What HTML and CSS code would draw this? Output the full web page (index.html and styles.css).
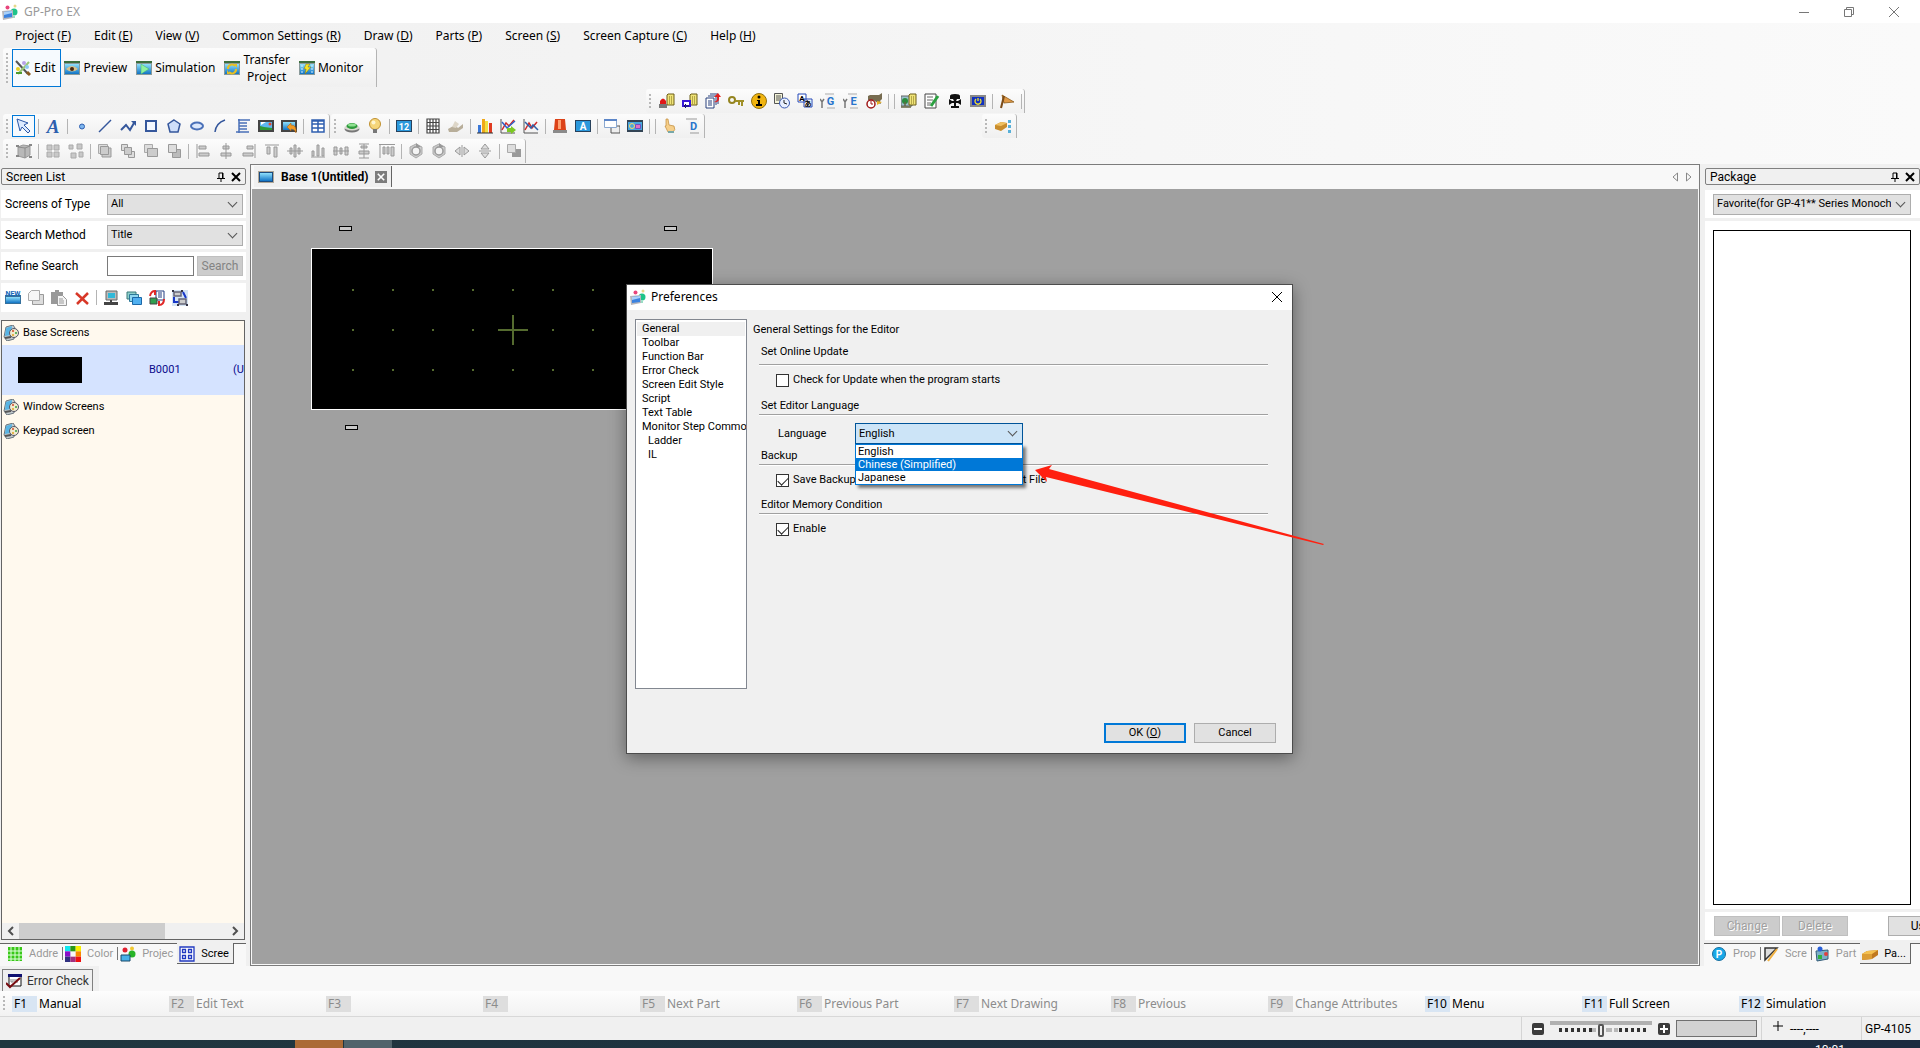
FILE: index.html
```html
<!DOCTYPE html>
<html lang="en">
<head>
    <meta charset="utf-8">
    <title>GP-Pro EX</title>
    <link rel="stylesheet" href="styles.css">
</head>
<body>
    <!-- icon sprite -->
    <svg class="sprite" aria-hidden="true">
        <defs>
            <linearGradient id="blue" x1="0" y1="0" x2="0" y2="1"><stop offset="0" stop-color="#8fe0fb"/><stop offset="1" stop-color="#1173c4"/></linearGradient>
            <symbol id="app" viewBox="0 0 16 16"><circle cx="5.500" cy="3.500" r="2" fill="#e8447c"/><circle cx="13" cy="2" r="1.500" fill="#e6d88a"/><circle cx="12" cy="8" r="3.500" fill="#1fc48a"/><path d="M5 12h8v2H5z" fill="#9adcc4"/><path d="M0 7l11-1v8l-10 2z" fill="#b6b6bc"/><path d="M2 8l8-1v6l-8 1z" fill="#3b82e0"/><path d="M2 8l8-1v2l-8 2z" fill="#a8d0fa"/></symbol>
            <symbol id="edit" viewBox="0 0 16 16"><path d="M1 1l12 13" stroke="#555" stroke-width="2"/><path d="M12 12l3 3" stroke="#8a5a20" stroke-width="3"/><path d="M14 2L3 14" stroke="#9ac878" stroke-width="2"/><circle cx="9" cy="3" r="2" fill="#b8a0e8"/><circle cx="3" cy="9" r="2" fill="#e8d020"/><circle cx="12" cy="7" r="2" fill="#8fc8f0"/><path d="M1 13h6" stroke="#4e9a30" stroke-width="2"/></symbol>
            <symbol id="frame" viewBox="0 0 16 16"><path d="M0 1h16v14H0z" fill="#8a9a9a"/><path d="M0 1h16v2H0z" fill="#3c6e3c"/><path d="M1 4h14v10H1z" fill="url(#blue)"/></symbol>
            <symbol id="preview" viewBox="0 0 16 16"><use href="#frame"/><path d="M2 9q6-6 12 0q-6 5-12 0z" fill="#d8c088"/><circle cx="8" cy="9" r="2" fill="#402818"/></symbol>
            <symbol id="simulation" viewBox="0 0 16 16"><use href="#frame"/><path d="M5 4l8 5-8 5z" fill="#8ff0a0" stroke="#3cae70" stroke-width=".5"/></symbol>
            <symbol id="transfer" viewBox="0 0 16 16"><use href="#frame"/><path d="M4 9a4 4 0 0 1 7-3M12 9a4 4 0 0 1-7 3" stroke="#e8c020" stroke-width="2" fill="none"/><path d="M10 4h3v4zM6 14H3v-4z" fill="#e8c020"/></symbol>
            <symbol id="monitor" viewBox="0 0 16 16"><use href="#frame"/><path d="M3 5v8M13 5v8" stroke="#d8f0ff" stroke-dasharray="2 1"/><path d="M7 4h4L9 7h3l-6 7 1-5H5z" fill="#f4e428" stroke="#806c10" stroke-width=".5"/></symbol>
            <symbol id="select" viewBox="0 0 16 16"><path d="M1 1l11 4-4 2 6 6-2 2-6-6-2 4z" fill="#dceaff" stroke="#2b57a8"/></symbol>
            <symbol id="text" viewBox="0 0 16 16"><text x="8" y="15" class="glyph-serif" font-size="19" text-anchor="middle" fill="#2d5fae">A</text></symbol>
            <symbol id="dot" viewBox="0 0 16 16"><circle cx="8" cy="8.500" r="2.500" fill="#7eb6ee" stroke="#2f5fb0"/></symbol>
            <symbol id="line" viewBox="0 0 16 16"><path d="M2 14L14 2" stroke="#35579c" stroke-width="1.500"/></symbol>
            <symbol id="polyline" viewBox="0 0 16 16"><path d="M1 12l5-5 4 5 4-7" stroke="#35579c" stroke-width="2" fill="none"/><path d="M11 3h5v5z" fill="#35579c"/></symbol>
            <symbol id="rect" viewBox="0 0 16 16"><path d="M3 3h10v10H3z" fill="#f4f8ff" stroke="#35579c" stroke-width="2"/></symbol>
            <symbol id="polygon" viewBox="0 0 16 16"><path d="M8 2l6 4-2 8H4L2 6z" fill="#cfdffa" stroke="#35579c" stroke-width="1.500"/></symbol>
            <symbol id="ellipse" viewBox="0 0 16 16"><ellipse cx="8" cy="8" rx="6" ry="3.500" fill="#dce8fc" stroke="#4a70b8" stroke-width="2"/></symbol>
            <symbol id="arc" viewBox="0 0 16 16"><path d="M3 14q1-9 10-12" stroke="#35579c" stroke-width="1.500" fill="none"/></symbol>
            <symbol id="scale" viewBox="0 0 16 16"><path d="M4 1v14M3 2h12M4 5h8M4 8h8M4 11h8M1 14h13" stroke="#4a70b8" stroke-width="1.500"/></symbol>
            <symbol id="picture" viewBox="0 0 16 16"><path d="M0 2h16v12H0z" fill="#444"/><path d="M2 4h12v8H2z" fill="#5db8f0"/><path d="M2 12V8l4 1 8 1v2z" fill="#2e9a38"/><path d="M3 4h5l-5 3z" fill="#fff"/><circle cx="12" cy="6" r="1.500" fill="#e84830"/></symbol>
            <symbol id="image-out" viewBox="0 0 16 16"><path d="M0 2h16v12H0z" fill="#444"/><path d="M2 4h12v8H2z" fill="url(#blue)"/><path d="M6 9l4-4v2q6 0 5 8-1-4-5-4v2z" fill="#f29a22" stroke="#a86010" stroke-width=".5"/></symbol>
            <symbol id="table" viewBox="0 0 16 16"><path d="M2 2h12v12H2zM2 6h12M2 10h12M8 2v12M2 3h12" fill="#fff" stroke="#2f5fb0" stroke-width="1.500"/></symbol>
            <symbol id="switch" viewBox="0 0 16 16"><ellipse cx="8" cy="11" rx="7.500" ry="3.500" fill="#777"/><ellipse cx="8" cy="9.500" rx="7.500" ry="3" fill="#d8d8d0"/><ellipse cx="8" cy="8" rx="5.500" ry="3" fill="#2d9a3a"/><ellipse cx="8" cy="7" rx="4" ry="1.500" fill="#8fe090"/></symbol>
            <symbol id="lamp" viewBox="0 0 16 16"><circle cx="8" cy="6" r="5.500" fill="#f6d67a" stroke="#c09030"/><circle cx="6.500" cy="4.500" r="2" fill="#fff6d0"/><path d="M6 11h4v4H6z" fill="#777"/></symbol>
            <symbol id="display12" viewBox="0 0 16 16"><path d="M0 2h16v12H0z" fill="#27415c"/><path d="M1 3h14v10H1z" fill="#2b98dc"/><text x="8" y="11.500" font-size="9" font-weight="700" text-anchor="middle" fill="#fff">12</text></symbol>
            <symbol id="keypad" viewBox="0 0 16 16"><path d="M2 1h12v14H2zM5 1v14M8 1v14M11 1v14M2 4.500h12M2 8h12M2 11.500h12" fill="#fff" stroke="#444" stroke-width="1.200"/></symbol>
            <symbol id="drive" viewBox="0 0 16 16"><path d="M0 11l7-4 3 3 5-4v4l-6 4H1z" fill="#b8ae9a"/><path d="M7 3l4 3-3 4-4-1z" fill="#ddd6c8"/></symbol>
            <symbol id="bars" viewBox="0 0 16 16"><path d="M1 7h3v8H1z" fill="#3a78d8"/><path d="M5 1h3v14H5z" fill="#f0a818"/><path d="M8 3h3v12H8z" fill="#f0e040"/><path d="M12 5h3v10h-3z" fill="#e03a20"/><path d="M0 15h16" stroke="#333"/></symbol>
            <symbol id="trend-run" viewBox="0 0 16 16"><path d="M1 1v14h14" stroke="#555" fill="none"/><path d="M2 12l4-7 3 3 5-6" stroke="#d02828" stroke-width="1.500" fill="none"/><path d="M2 4l5 6 8-7" stroke="#3060c8" stroke-width="1.500" fill="none"/><path d="M7 10h4V8l5 4-5 4v-2H7z" fill="#7cc822"/></symbol>
            <symbol id="trend" viewBox="0 0 16 16"><path d="M1 1v14h14" stroke="#555" fill="none"/><path d="M2 12l4-7 3 5 5-6" stroke="#d02828" stroke-width="1.500" fill="none"/><path d="M2 4l6 6 2-3 5 5" stroke="#3060a8" stroke-width="1.500" fill="none"/></symbol>
            <symbol id="alarm" viewBox="0 0 16 16"><path d="M3 1h10l1 11H2z" fill="#dc4218"/><path d="M6 2h3v9H6z" fill="#ffa070"/><path d="M1 12h14v3H1z" fill="#8a8a8a"/></symbol>
            <symbol id="message" viewBox="0 0 16 16"><path d="M0 2h16v12H0z" fill="#27415c"/><path d="M1 3h14v10H1z" fill="#2b98dc"/><text x="8" y="11.500" font-size="10" font-weight="700" text-anchor="middle" fill="#fff">A</text></symbol>
            <symbol id="windows" viewBox="0 0 16 16"><path d="M7 8h9v7H7z" fill="#eee" stroke="#555"/><path d="M.5 1.500h12v8H.5z" fill="#fff" stroke="#8aa8d0"/><path d="M0 1h13v2H0z" fill="#5c86c8"/></symbol>
            <symbol id="movie" viewBox="0 0 16 16"><path d="M0 2h16v12H0z" fill="#345"/><path d="M1 4h14v8H1z" fill="#48a8e0"/><circle cx="5" cy="8" r="2.500" fill="none" stroke="#ffd860"/><path d="M8.500 6.500h5v4h-5z" fill="#e070c8" stroke="#7050c0"/></symbol>
            <symbol id="hand" viewBox="0 0 16 16"><path d="M4 1h2l1 6 5 1q2 4-1 6H6L3 8h1z" fill="#f6cf8a" stroke="#c08a38" stroke-width=".7"/><path d="M6 13h6v2H6z" fill="#78a8a8"/></symbol>
            <symbol id="script-d" viewBox="0 0 16 16"><path d="M2 2h12l-1 12H5L4 4z" fill="#f4f4f4"/><path d="M1 1h11M5 15h9" stroke="#999"/><text x="8.500" y="12" font-size="11" font-weight="700" text-anchor="middle" fill="#2874cc">D</text></symbol>
            <symbol id="script-g" viewBox="0 0 16 16"><path d="M6 2h9v12H6z" fill="#f4f4f4"/><path d="M5 1h9M7 15h8" stroke="#aaa"/><path d="M2 8v7M0 6l2 3 2-3" stroke="#777" stroke-width="1.500" fill="none"/><text x="10.500" y="12" font-size="11" font-weight="700" text-anchor="middle" fill="#2874cc">G</text></symbol>
            <symbol id="script-e" viewBox="0 0 16 16"><path d="M6 2h9v12H6z" fill="#f4f4f4"/><path d="M5 1h9M7 15h8" stroke="#aaa"/><path d="M2 8v7M0 6l2 3 2-3" stroke="#777" stroke-width="1.500" fill="none"/><text x="10.500" y="12" font-size="11" font-weight="700" text-anchor="middle" fill="#2874cc">E</text></symbol>
            <symbol id="page" viewBox="0 0 16 16"><path d="M9 1h6v11H8V2z" fill="#f0e478" stroke="#6c5f18"/><path d="M10 4h4M10 6h4M10 8h4M10 10h4" stroke="#7c6c18" stroke-dasharray="1 1"/></symbol>
            <symbol id="g-alarm" viewBox="0 0 16 16"><use href="#page"/><path d="M1 11V8q3-5 6 0v3z" fill="#e01818"/><path d="M0 11h8v4H0z" fill="#777"/></symbol>
            <symbol id="g-sample" viewBox="0 0 16 16"><use href="#page"/><path d="M1 8h7v5H1z" fill="#fff" stroke="#3818d8" stroke-width="2"/><path d="M2 13h5M4 11l-2 2 2 2" stroke="#101060" fill="none"/></symbol>
            <symbol id="g-recipe" viewBox="0 0 16 16"><path d="M1 5h8v10H1zM3 3h8v9M5 1h8v10" fill="#fff" stroke="#28407c"/><path d="M3 8h4M3 10h4M3 12h4" stroke="#28407c"/><path d="M9 9q4-1 3-5H9l4-4 3 4h-2q1 6-5 5z" fill="#e02020"/></symbol>
            <symbol id="key" viewBox="0 0 16 16"><circle cx="4" cy="7" r="3" fill="none" stroke="#948420" stroke-width="2"/><path d="M7 8h9M11 8v4M14 8v5" stroke="#a09028" stroke-width="2"/></symbol>
            <symbol id="info" viewBox="0 0 16 16"><circle cx="8" cy="8" r="7.500" fill="#f0b410" stroke="#907010"/><circle cx="8" cy="4" r="1.500"/><path d="M6 7h3v4h2v2H5v-2h2V8H6z"/></symbol>
            <symbol id="schedule" viewBox="0 0 16 16"><path d="M.5.5h8v10h-8z" fill="#f4f4d8" stroke="#555"/><path d="M2 3h5M2 5h5M2 7h5" stroke="#555"/><circle cx="10.500" cy="10" r="5" fill="#e8f0ff" stroke="#3858b0"/><path d="M10 7v3l3 1" stroke="#222" fill="none"/></symbol>
            <symbol id="lang" viewBox="0 0 16 16"><path d="M1 1h8v8H1zM7 6h8v8H7z" fill="#fff" stroke="#2448b8"/><text x="5" y="8" font-size="8" font-weight="700" text-anchor="middle">A</text><text x="11" y="13" font-size="7" font-weight="700" text-anchor="middle">あ</text></symbol>
            <symbol id="timer" viewBox="0 0 16 16"><path d="M4 2h9l3-2v6l-2 2 1 3-3-1-5-3H2V3z" fill="#776c50"/><path d="M11 8l5 1-5 3z" fill="#e8b020"/><circle cx="5" cy="11" r="4" fill="#fff" stroke="#a01818" stroke-width="1.500"/><path d="M5 8v3h2" stroke="#a01818" fill="none"/></symbol>
            <symbol id="tree-page" viewBox="0 0 16 16"><path d="M0 3h11v10H0z" fill="#9ac0cc" stroke="#666"/><circle cx="4" cy="8" r="3" fill="#2a8c3c"/><path d="M4 9v4M0 14h10" stroke="#664" stroke-width="1.500"/><use href="#page"/></symbol>
            <symbol id="note" viewBox="0 0 16 16"><path d="M1 1h11v14H1z" fill="#fff" stroke="#444"/><path d="M3 4h6M3 7h6M3 10h4M3 12h3" stroke="#666"/><path d="M14 3L7 13" stroke="#2ba040" stroke-width="3"/></symbol>
            <symbol id="valve" viewBox="0 0 16 16"><path d="M3 3q0-2 5-2t5 2v3h-3l-1 2h2l3-2v6l-3-2H9v3h3v2H4v-2h3v-3H5l-3 2V6l3 2h2L6 6H3z" fill="#111"/></symbol>
            <symbol id="power" viewBox="0 0 16 16"><path d="M0 2h16v12H0z" fill="#888"/><path d="M2 4h12v8H2z" fill="#1030c0"/><path d="M6 6a3 3 0 1 0 4 0M8 5v3" stroke="#f4e428" stroke-width="1.300" fill="none"/></symbol>
            <symbol id="flag" viewBox="0 0 16 16"><path d="M3 2l12 7-10 1z" fill="#e09a48" stroke="#8c5a18" stroke-width=".8"/><path d="M5 3L2 15" stroke="#7c4c18" stroke-width="2"/></symbol>
            <symbol id="box-tree" viewBox="0 0 16 16"><path d="M0 7l6-3 6 1v4l-6 4-6-2z" fill="#c88c2c"/><path d="M0 7l6 1 6-3-6-1z" fill="#f0c060"/><path d="M13 2h3v3h-3zM13 7h3v3h-3zM13 12h3v3h-3z" fill="#58b0d8"/></symbol>
            <symbol id="d-group" viewBox="0 0 16 16"><path d="M2 4l5-2 7 1v9l-5 3-7-2z" fill="#b8b8b8" stroke="#999"/><path d="M2 4l7 1 5-2M9 5v10" stroke="#8c8c8c" fill="none"/><path d="M0 3h3M0 13h3M13 2h3M13 14h3" stroke="#888" stroke-width="2"/></symbol>
            <symbol id="d-tile" viewBox="0 0 16 16"><path d="M2 2h5v5H2zM9 2h5v5H9zM2 9h5v5H2zM9 9h5v5H9z" fill="#c8c8c8" stroke="#aaa"/></symbol>
            <symbol id="d-ungroup" viewBox="0 0 16 16"><path d="M1 2h4v4H1zM9 1h5v5H9zM3 10h5v5H3zM11 9h4v5h-4z" fill="#c8c8c8" stroke="#aaa"/></symbol>
            <symbol id="d-front" viewBox="0 0 16 16"><path d="M5 5h9v9H5z" fill="#ccc" stroke="#999"/><path d="M1.500 1.500h9v9h-9z" fill="#ddd" stroke="#aaa"/><path d="M3.500 3.500h8v8h-8z" fill="#ccc" stroke="#999"/></symbol>
            <symbol id="d-forward" viewBox="0 0 16 16"><path d="M1.500 1.500h6v6h-6zM8.500 8.500h6v6h-6z" fill="#ddd" stroke="#999"/><path d="M4.500 4.500h7v7h-7z" fill="#ccc" stroke="#999"/></symbol>
            <symbol id="d-back" viewBox="0 0 16 16"><path d="M1.500 1.500h8v8h-8z" fill="#ddd" stroke="#aaa"/><path d="M4.500 5.500h10v8h-10z" fill="#ccc" stroke="#999"/></symbol>
            <symbol id="d-last" viewBox="0 0 16 16"><path d="M6.500 6.500h8v8h-8z" fill="#bbb" stroke="#999"/><path d="M2.500 1.500h8v8h-8z" fill="#ddd" stroke="#999"/></symbol>
            <symbol id="d-left" viewBox="0 0 16 16"><path d="M2 1v14M4 3h7v3H4zM4 10h10v3H4z" fill="#ccc" stroke="#999"/></symbol>
            <symbol id="d-center" viewBox="0 0 16 16"><path d="M8 0v16M5 3h6v3H5zM3 10h10v3H3z" fill="#ccc" stroke="#999"/></symbol>
            <symbol id="d-right" viewBox="0 0 16 16"><path d="M14 1v14M6 3h6v3H6zM2 10h10v3H2z" fill="#ccc" stroke="#999"/></symbol>
            <symbol id="d-top" viewBox="0 0 16 16"><path d="M1 2h14M3 4h3v7H3zM10 4h3v10h-3z" fill="#ccc" stroke="#999"/></symbol>
            <symbol id="d-middle" viewBox="0 0 16 16"><path d="M0 8h16M3 5h2v6H3zM7 2h2v12H7zM11 5h2v6h-2z" fill="#ccc" stroke="#999"/></symbol>
            <symbol id="d-bottom" viewBox="0 0 16 16"><path d="M1 14h14M2 8h2v5H2zM7 2h2v11H7zM12 5h2v8h-2z" fill="#ccc" stroke="#999"/></symbol>
            <symbol id="d-hspace" viewBox="0 0 16 16"><path d="M0 8h16M1 4h3v8H1zM12 4h3v8h-3zM7 5h2v6H7z" fill="#ccc" stroke="#999"/></symbol>
            <symbol id="d-vspace" viewBox="0 0 16 16"><path d="M3 1h10M8 1v14M3 15h10M5 3h6v2H5zM3 8h10v3H3z" fill="#ccc" stroke="#999"/></symbol>
            <symbol id="d-equal" viewBox="0 0 16 16"><path d="M0 1.500h16M1 1v14M4 4h2v7H4zM8 4h2v7H8zM12 4h3v9h-3z" fill="#ccc" stroke="#999"/></symbol>
            <symbol id="d-rotate" viewBox="0 0 16 16"><path d="M8 1l6 3v7l-6 4-6-4V4z" fill="#ccc" stroke="#aaa"/><circle cx="8" cy="8" r="4" fill="#f4f4f4" stroke="#999" stroke-width="1.500"/><path d="M8 0l5 4H8z" fill="#999"/></symbol>
            <symbol id="d-fliph" viewBox="0 0 16 16"><path d="M1 8l5-4v8zM15 8l-5-4v8zM8 2v12" fill="#ddd" stroke="#999"/></symbol>
            <symbol id="d-flipv" viewBox="0 0 16 16"><path d="M8 1l4 5H4zM8 15l4-5H4zM2 8h12" fill="#ddd" stroke="#999"/></symbol>
            <symbol id="d-merge" viewBox="0 0 16 16"><path d="M6 6h9v8H6z" fill="#999"/><path d="M1.500 1.500h8v8h-8z" fill="#ddd" stroke="#aaa"/></symbol>
            <symbol id="new" viewBox="0 0 16 16"><path d="M0 5h16v9H0z" fill="#35709c"/><path d="M1 7h14v6H1z" fill="url(#blue)"/><text x="8" y="5.500" font-size="7" font-weight="700" text-anchor="middle" fill="#1668b8">NEW</text></symbol>
            <symbol id="copy" viewBox="0 0 16 16"><path d="M4.500 4.500h11v10h-11z" fill="#ddd" stroke="#999"/><path d="M.5 3.500l3-3h8v10H.5z" fill="#f6f6f6" stroke="#aaa"/></symbol>
            <symbol id="paste" viewBox="0 0 16 16"><path d="M0 2h4V0h4v2h4v12H0z" fill="#999"/><path d="M6.500 5.500h5l4 4v6h-9z" fill="#f4f4f4" stroke="#999"/><path d="M8 9h4M8 11h5M8 13h5" stroke="#999"/></symbol>
            <symbol id="delete" viewBox="0 0 16 16"><path d="M2 3l12 11M14 3L3 14" stroke="#d83828" stroke-width="2.500"/></symbol>
            <symbol id="pc" viewBox="0 0 16 16"><path d="M3 1h11v9H3z" fill="#bbb" stroke="#666"/><path d="M5 3h7v5H5z" fill="#30b8d8"/><path d="M1 12h6v3H1zM9 12h6v3H9zM7 10h2v5H7z" fill="#444"/></symbol>
            <symbol id="layers" viewBox="0 0 16 16"><path d="M1 2h9v7H1z" fill="#8fd0cc" stroke="#387878"/><path d="M3.500 4.500h9v7h-9z" fill="#8fd8f0" stroke="#2c7898"/><path d="M6.500 7.500h9v7h-9z" fill="#50b0f0" stroke="#1c68a8"/></symbol>
            <symbol id="convert" viewBox="0 0 16 16"><path d="M7 1h8v9H7z" fill="#fff" stroke="#223c80"/><path d="M9 3h4M9 5h4M9 7h4" stroke="#223c80"/><path d="M1 8h7v6H1z" fill="#30a050" stroke="#444"/><path d="M1 6q1-5 5-5v4M15 9q0 6-5 6v-4" stroke="#e02828" stroke-width="2" fill="none"/></symbol>
            <symbol id="link" viewBox="0 0 16 16"><path d="M0 0h16v16H0z" fill="#d4e4f4"/><path d="M2 7v5h5M11 2l3 6" stroke="#1838c8" stroke-width="2" fill="none"/><path d="M2 2h7v4H2zM7 9h7v5H7z" fill="#ccc" stroke="#667" stroke-width="1.500"/><path d="M0 0h2v2H0zM9 0h2v2H9zM5 14h2v2H5zM14 14h2v2h-2z" fill="#334"/></symbol>
            <symbol id="cat" viewBox="0 0 16 16"><path d="M3 2l7-2 2 3-1 11-7 2-3-4z" fill="#c4ccd0" stroke="#68747c"/><path d="M3 3l6-2-1 9-6 1z" fill="#58b4e4"/><circle cx="11" cy="8" r="4.500" fill="#f0ead0" stroke="#556"/><circle cx="10" cy="6" r="1" fill="#d04828"/><circle cx="13" cy="8" r="1" fill="#38a040"/><circle cx="10" cy="10" r="1" fill="#e0a020"/><path d="M2 13l6-1" stroke="#555" stroke-width="2"/></symbol>
            <symbol id="base" viewBox="0 0 16 12"><path d="M0 0h16v12H0z" fill="#b0a898"/><path d="M1 1h14v10H1z" fill="#1c4c80"/><path d="M2 2h12v8H2z" fill="url(#blue)"/></symbol>
            <symbol id="pin" viewBox="0 0 10 10"><path d="M3 1h4v5M3 1v5M1 6.500h8M5 7v3M6.500 1v5" stroke="#000" fill="none"/></symbol>
            <symbol id="close" viewBox="0 0 10 10"><path d="M1 1l8 8M9 1L1 9" stroke="currentColor" stroke-width="2"/></symbol>
            <symbol id="t-grid" viewBox="0 0 16 16"><path d="M1 1h14v14H1z" fill="#38c818"/><path d="M0 5h16M0 9h16M0 13h16M4 0v16M8 0v16M12 0v16" stroke="#e4ffe0"/></symbol>
            <symbol id="t-color" viewBox="0 0 15 15"><path d="M0 0h5v5H0z" fill="#10e8f0"/><path d="M5 0h5v5H5z" fill="#289818"/><path d="M10 0h5v5h-5z" fill="#f8f000"/><path d="M0 5h5v5H0z" fill="#8810c8"/><path d="M10 5h5v5h-5z" fill="#f88800"/><path d="M0 10h5v5H0z" fill="#303080"/><path d="M5 10h5v5H5z" fill="#a03080"/><path d="M10 10h5v5h-5z" fill="#f01010"/></symbol>
            <symbol id="t-project" viewBox="0 0 16 16"><circle cx="5" cy="4" r="2.500" fill="#e02030"/><circle cx="12" cy="2.500" r="2" fill="#f0c830"/><circle cx="12" cy="8" r="3.500" fill="#28b428"/><path d="M1 9h9v6H1z" fill="#48b0e8" stroke="#184868"/></symbol>
            <symbol id="t-screen" viewBox="0 0 16 16"><path d="M1 1h14v14H1zM3.500 3.500h3v3h-3zM9.500 3.500h3v3h-3zM3.500 9.500h3v3h-3zM9.500 9.500h3v3h-3z" fill="#fff" stroke="#2038c0" stroke-width="1.300"/></symbol>
            <symbol id="t-prop" viewBox="0 0 16 16"><circle cx="8" cy="8" r="6.500" fill="#18a8e8" stroke="#1870a0"/><text x="8" y="11.500" font-size="10" font-weight="700" text-anchor="middle" fill="#fff">P</text></symbol>
            <symbol id="t-draw" viewBox="0 0 16 16"><path d="M2 2h12L2 14z" fill="#ddd" stroke="#333" stroke-width="1.500"/><path d="M14 3L5 15" stroke="#f0b040" stroke-width="2"/></symbol>
            <symbol id="t-part" viewBox="0 0 16 16"><path d="M2 5l12-1v9l-11 2z" fill="#7cb0c8" stroke="#345c78"/><circle cx="6" cy="3" r="2.500" fill="#2860d8"/><circle cx="12" cy="8" r="2" fill="#e04040"/><path d="M4 9h4v4H4z" fill="#30b040"/></symbol>
            <symbol id="t-pack" viewBox="0 0 16 16"><path d="M0 8l5-3 11-1v5l-6 4-10 1z" fill="#c07820"/><path d="M0 8l5-3 11-1-6 4z" fill="#f4c050"/><path d="M0 8h10v5l-10 1z" fill="#dc9c34"/></symbol>
            <symbol id="t-error" viewBox="0 0 16 14"><path d="M3 1h12v11H3z" fill="#fff" stroke="#111"/><path d="M2 0h14v3H2z" fill="#101070"/><path d="M5 5v3h2V5M9 5v3M11 5v4" stroke="#888" fill="none"/><path d="M0 9l4 4 10-9" stroke="#780c10" stroke-width="2" fill="none"/></symbol>
        </defs>
    </svg>

    <div class="app">
        <header class="titlebar">
            <svg class="icon"><use href="#app"/></svg>
            <h1 class="app-name">GP-Pro EX</h1>
            <div class="window-buttons">
                <button aria-label="Minimize"><svg viewBox="0 0 12 12"><path d="M1 6.500h10"/></svg></button>
                <button aria-label="Restore"><svg viewBox="0 0 12 12"><path d="M1.500 3.500h7v7h-7zM3.500 3V1.500h7v7H9"/></svg></button>
                <button aria-label="Close"><svg viewBox="0 0 12 12"><path d="M1 1l10 10M11 1L1 11"/></svg></button>
            </div>
        </header>

        <nav class="menu">
            <button>Project (<u>F</u>)</button>
            <button>Edit (<u>E</u>)</button>
            <button>View (<u>V</u>)</button>
            <button>Common Settings (<u>R</u>)</button>
            <button>Draw (<u>D</u>)</button>
            <button>Parts (<u>P</u>)</button>
            <button>Screen (<u>S</u>)</button>
            <button>Screen Capture (<u>C</u>)</button>
            <button>Help (<u>H</u>)</button>
        </nav>

        <div class="toolbars">
            <div class="toolbar modes">
                <span class="grip"></span>
                <button class="mode active"><svg class="icon"><use href="#edit"/></svg>Edit</button>
                <button class="mode"><svg class="icon"><use href="#preview"/></svg>Preview</button>
                <button class="mode"><svg class="icon"><use href="#simulation"/></svg>Simulation</button>
                <button class="mode"><svg class="icon"><use href="#transfer"/></svg>Transfer<br>Project</button>
                <button class="mode"><svg class="icon"><use href="#monitor"/></svg>Monitor</button>
            </div>

            <div class="toolbar-row common">
                <div class="toolbar">
                    <span class="grip"></span>
                    <button class="tool" aria-label="Alarm"><svg><use href="#g-alarm"/></svg></button>
                    <button class="tool" aria-label="Sampling"><svg><use href="#g-sample"/></svg></button>
                    <button class="tool" aria-label="Recipe"><svg><use href="#g-recipe"/></svg></button>
                    <button class="tool" aria-label="Security"><svg><use href="#key"/></svg></button>
                    <button class="tool" aria-label="Interlock"><svg><use href="#info"/></svg></button>
                    <button class="tool" aria-label="Time Schedule"><svg><use href="#schedule"/></svg></button>
                    <button class="tool" aria-label="Text Table"><svg><use href="#lang"/></svg></button>
                    <button class="tool" aria-label="Global D-Script"><svg><use href="#script-g"/></svg></button>
                    <button class="tool" aria-label="Extended Script"><svg><use href="#script-e"/></svg></button>
                    <button class="tool" aria-label="Trigger Action"><svg><use href="#timer"/></svg></button>
                    <span class="sep"></span><span class="sep"></span>
                    <button class="tool" aria-label="Image Registration"><svg><use href="#tree-page"/></svg></button>
                    <button class="tool" aria-label="Text Registration"><svg><use href="#note"/></svg></button>
                    <button class="tool" aria-label="Mark"><svg><use href="#valve"/></svg></button>
                    <button class="tool" aria-label="Startup Screen"><svg><use href="#power"/></svg></button>
                    <span class="sep"></span>
                    <button class="tool" aria-label="Flag"><svg><use href="#flag"/></svg></button>
                    <span class="sep"></span>
                </div>
            </div>

            <div class="toolbar-row">
                <div class="toolbar">
                    <span class="grip"></span>
                    <button class="tool active" aria-label="Select"><svg><use href="#select"/></svg></button>
                    <span class="sep"></span>
                    <button class="tool" aria-label="Text"><svg><use href="#text"/></svg></button>
                    <span class="sep"></span>
                    <button class="tool" aria-label="Dot"><svg><use href="#dot"/></svg></button>
                    <button class="tool" aria-label="Line"><svg><use href="#line"/></svg></button>
                    <button class="tool" aria-label="Polyline"><svg><use href="#polyline"/></svg></button>
                    <button class="tool" aria-label="Rectangle"><svg><use href="#rect"/></svg></button>
                    <button class="tool" aria-label="Polygon"><svg><use href="#polygon"/></svg></button>
                    <button class="tool" aria-label="Ellipse"><svg><use href="#ellipse"/></svg></button>
                    <button class="tool" aria-label="Arc"><svg><use href="#arc"/></svg></button>
                    <button class="tool" aria-label="Scale"><svg><use href="#scale"/></svg></button>
                    <button class="tool" aria-label="Image"><svg><use href="#picture"/></svg></button>
                    <button class="tool" aria-label="Call Screen"><svg><use href="#image-out"/></svg></button>
                    <span class="sep"></span>
                    <button class="tool" aria-label="Table"><svg><use href="#table"/></svg></button>
                </div>
                <div class="toolbar">
                    <span class="grip"></span>
                    <button class="tool" aria-label="Switch"><svg><use href="#switch"/></svg></button>
                    <button class="tool" aria-label="Lamp"><svg><use href="#lamp"/></svg></button>
                    <span class="sep"></span>
                    <button class="tool" aria-label="Data Display"><svg><use href="#display12"/></svg></button>
                    <span class="sep"></span>
                    <button class="tool" aria-label="Keypad"><svg><use href="#keypad"/></svg></button>
                    <button class="tool" aria-label="Data Transfer"><svg><use href="#drive"/></svg></button>
                    <span class="sep"></span>
                    <button class="tool" aria-label="Graph"><svg><use href="#bars"/></svg></button>
                    <button class="tool" aria-label="Historical Trend"><svg><use href="#trend-run"/></svg></button>
                    <button class="tool" aria-label="Trend Graph"><svg><use href="#trend"/></svg></button>
                    <span class="sep"></span>
                    <button class="tool" aria-label="Alarm Parts"><svg><use href="#alarm"/></svg></button>
                    <button class="tool" aria-label="Message Display"><svg><use href="#message"/></svg></button>
                    <span class="sep"></span>
                    <button class="tool" aria-label="Window"><svg><use href="#windows"/></svg></button>
                    <button class="tool" aria-label="Movie"><svg><use href="#movie"/></svg></button>
                    <span class="sep"></span><span class="sep"></span>
                    <button class="tool" aria-label="Trigger"><svg><use href="#hand"/></svg></button>
                    <button class="tool" aria-label="D-Script"><svg><use href="#script-d"/></svg></button>
                </div>
                <div class="toolbar package-bar">
                    <span class="grip"></span>
                    <button class="tool" aria-label="Package"><svg><use href="#box-tree"/></svg></button>
                </div>
            </div>

            <div class="toolbar-row">
                <div class="toolbar">
                    <span class="grip"></span>
                    <button class="tool" aria-label="Group" disabled><svg><use href="#d-group"/></svg></button>
                    <span class="sep"></span>
                    <button class="tool" aria-label="Tile" disabled><svg><use href="#d-tile"/></svg></button>
                    <button class="tool" aria-label="Ungroup" disabled><svg><use href="#d-ungroup"/></svg></button>
                    <span class="sep"></span>
                    <button class="tool" aria-label="Bring to Front" disabled><svg><use href="#d-front"/></svg></button>
                    <button class="tool" aria-label="Bring Forward" disabled><svg><use href="#d-forward"/></svg></button>
                    <button class="tool" aria-label="Send Backward" disabled><svg><use href="#d-back"/></svg></button>
                    <button class="tool" aria-label="Send to Back" disabled><svg><use href="#d-last"/></svg></button>
                    <span class="sep"></span>
                    <button class="tool" aria-label="Align Left" disabled><svg><use href="#d-left"/></svg></button>
                    <button class="tool" aria-label="Align Center" disabled><svg><use href="#d-center"/></svg></button>
                    <button class="tool" aria-label="Align Right" disabled><svg><use href="#d-right"/></svg></button>
                    <button class="tool" aria-label="Align Top" disabled><svg><use href="#d-top"/></svg></button>
                    <button class="tool" aria-label="Align Middle" disabled><svg><use href="#d-middle"/></svg></button>
                    <button class="tool" aria-label="Align Bottom" disabled><svg><use href="#d-bottom"/></svg></button>
                    <button class="tool" aria-label="Horizontal Spacing" disabled><svg><use href="#d-hspace"/></svg></button>
                    <button class="tool" aria-label="Vertical Spacing" disabled><svg><use href="#d-vspace"/></svg></button>
                    <button class="tool" aria-label="Equal Size" disabled><svg><use href="#d-equal"/></svg></button>
                    <span class="sep"></span>
                    <button class="tool" aria-label="Rotate Left" disabled><svg><use href="#d-rotate"/></svg></button>
                    <button class="tool" aria-label="Rotate Right" disabled><svg><use href="#d-rotate"/></svg></button>
                    <button class="tool" aria-label="Flip Horizontal" disabled><svg><use href="#d-fliph"/></svg></button>
                    <button class="tool" aria-label="Flip Vertical" disabled><svg><use href="#d-flipv"/></svg></button>
                    <span class="sep"></span>
                    <button class="tool" aria-label="Merge" disabled><svg><use href="#d-merge"/></svg></button>
                </div>
            </div>
        </div>

        <main class="workspace">
            <aside class="dock dock-left">
                <div class="dock-header">
                    <h2>Screen List</h2>
                    <button aria-label="Pin"><svg><use href="#pin"/></svg></button>
                    <button aria-label="Close"><svg><use href="#close"/></svg></button>
                </div>
                <div class="field">
                    <label for="screenType">Screens of Type</label>
                    <div class="combo"><select id="screenType"><option>All</option></select></div>
                </div>
                <div class="field">
                    <label for="searchMethod">Search Method</label>
                    <div class="combo"><select id="searchMethod"><option>Title</option></select></div>
                </div>
                <div class="field">
                    <label for="refine">Refine Search</label>
                    <input id="refine" class="refine" type="text">
                    <button class="btn" disabled>Search</button>
                </div>
                <div class="list-tools">
                    <button class="tool" aria-label="New"><svg><use href="#new"/></svg></button>
                    <button class="tool" aria-label="Copy"><svg><use href="#copy"/></svg></button>
                    <button class="tool" aria-label="Paste"><svg><use href="#paste"/></svg></button>
                    <button class="tool" aria-label="Delete"><svg><use href="#delete"/></svg></button>
                    <span class="sep"></span>
                    <button class="tool" aria-label="Attributes"><svg><use href="#pc"/></svg></button>
                    <button class="tool" aria-label="Duplicate"><svg><use href="#layers"/></svg></button>
                    <button class="tool" aria-label="Convert"><svg><use href="#convert"/></svg></button>
                    <button class="tool" aria-label="Link"><svg><use href="#link"/></svg></button>
                </div>
                <div class="screen-list">
                    <div class="category"><svg class="icon"><use href="#cat"/></svg>Base Screens</div>
                    <div class="screen-item">
                        <span class="thumb"></span>
                        <span class="screen-no">B0001</span>
                        <span>(Untitled)</span>
                    </div>
                    <div class="category"><svg class="icon"><use href="#cat"/></svg>Window Screens</div>
                    <div class="category"><svg class="icon"><use href="#cat"/></svg>Keypad screen</div>
                    <div class="scrollbar">
                        <svg viewBox="0 0 8 10"><path d="M6 1L2 5l4 4"/></svg>
                        <span class="scroll-track"><span class="scroll-thumb"></span></span>
                        <svg viewBox="0 0 8 10"><path d="M2 1l4 4-4 4"/></svg>
                    </div>
                </div>
                <div class="tabs">
                    <button class="tab"><svg class="icon"><use href="#t-grid"/></svg><span>Addre</span></button>
                    <button class="tab"><svg class="icon"><use href="#t-color"/></svg><span>Color</span></button>
                    <button class="tab"><svg class="icon"><use href="#t-project"/></svg><span>Projec</span></button>
                    <button class="tab active"><svg class="icon"><use href="#t-screen"/></svg><span>Scree</span></button>
                </div>
            </aside>

            <section class="document">
                <div class="doc-tabs">
                    <div class="doc-tab">
                        <svg class="base-icon"><use href="#base"/></svg>
                        <span>Base 1(Untitled)</span>
                        <button class="doc-close" aria-label="Close tab"><svg><use href="#close"/></svg></button>
                    </div>
                    <svg class="doc-arrows" viewBox="0 0 20 10"><path d="M5.500 1v8L1 5zM14.500 1v8L19 5z" fill="none" stroke="#888"/></svg>
                </div>
                <div class="canvas">
                    <span class="handle handle-a"></span>
                    <span class="handle handle-b"></span>
                    <span class="handle handle-c"></span>
                    <svg class="screen" viewBox="0 0 400 160">
                        <defs>
                            <pattern id="dots" x="20" y="20" width="40" height="40" patternUnits="userSpaceOnUse"><path d="M20 20h2v2h-2z" fill="#556b2f"/></pattern>
                        </defs>
                        <path d="M20 20h360v120H20z" fill="url(#dots)"/>
                        <path d="M201 66v30M186 81h30" stroke="#556b2f" stroke-width="2"/>
                    </svg>
                </div>
            </section>

            <aside class="dock dock-right">
                <div class="dock-header">
                    <h2>Package</h2>
                    <button aria-label="Pin"><svg><use href="#pin"/></svg></button>
                    <button aria-label="Close"><svg><use href="#close"/></svg></button>
                </div>
                <div class="field">
                    <div class="combo"><select aria-label="Package group"><option>Favorite(for GP-41** Series Monochrome)</option></select></div>
                </div>
                <div class="package-area"><div class="package-list"></div></div>
                <div class="package-actions">
                    <button class="btn" disabled>Change</button>
                    <button class="btn" disabled>Delete</button>
                    <button class="btn use-btn">Use</button>
                </div>
                <div class="tabs">
                    <button class="tab"><svg class="icon"><use href="#t-prop"/></svg><span>Prop</span></button>
                    <button class="tab"><svg class="icon"><use href="#t-draw"/></svg><span>Scre</span></button>
                    <button class="tab"><svg class="icon"><use href="#t-part"/></svg><span>Part</span></button>
                    <button class="tab active"><svg class="icon"><use href="#t-pack"/></svg><span>Pa...</span></button>
                </div>
            </aside>
        </main>

        <div class="output-bar">
            <button class="output-tab"><svg class="icon"><use href="#t-error"/></svg>Error Check</button>
        </div>

        <div class="function-bar">
            <span class="grip"></span>
            <button class="fn"><kbd>F1</kbd>Manual</button>
            <button class="fn" disabled><kbd>F2</kbd>Edit Text</button>
            <button class="fn" disabled><kbd>F3</kbd></button>
            <button class="fn" disabled><kbd>F4</kbd></button>
            <button class="fn" disabled><kbd>F5</kbd>Next Part</button>
            <button class="fn" disabled><kbd>F6</kbd>Previous Part</button>
            <button class="fn" disabled><kbd>F7</kbd>Next Drawing</button>
            <button class="fn" disabled><kbd>F8</kbd>Previous</button>
            <button class="fn" disabled><kbd>F9</kbd>Change Attributes</button>
            <button class="fn"><kbd>F10</kbd>Menu</button>
            <button class="fn"><kbd>F11</kbd>Full Screen</button>
            <button class="fn"><kbd>F12</kbd>Simulation</button>
        </div>

        <footer class="status">
            <div class="zoom">
                <button class="zoom-btn" aria-label="Zoom out"><svg viewBox="0 0 12 12"><path d="M2 6h8"/></svg></button>
                <input class="zoom-range" type="range" min="0" max="100" value="50" aria-label="Zoom">
                <button class="zoom-btn" aria-label="Zoom in"><svg viewBox="0 0 12 12"><path d="M2 6h8M6 2v8"/></svg></button>
                <output class="zoom-value"></output>
            </div>
            <div class="position">
                <svg viewBox="0 0 10 10"><path d="M5 0v10M0 5h10" stroke="#000"/></svg>
                <span>----,----</span>
            </div>
            <div class="model">GP-4105</div>
        </footer>

        <div class="taskbar">
            <span class="task task-orange"></span>
            <span class="task task-gray"></span>
            <time class="clock">10:01</time>
        </div>
    </div>

    <div class="dialog" role="dialog" aria-labelledby="prefTitle">
        <div class="dialog-title">
            <svg class="icon"><use href="#app"/></svg>
            <h2 id="prefTitle">Preferences</h2>
            <button aria-label="Close"><svg viewBox="0 0 12 12"><path d="M1 1l10 10M11 1L1 11"/></svg></button>
        </div>
        <div class="dialog-body">
            <ul class="pref-nav">
                <li class="active">General</li>
                <li>Toolbar</li>
                <li>Function Bar</li>
                <li>Error Check</li>
                <li>Screen Edit Style</li>
                <li>Script</li>
                <li>Text Table</li>
                <li>Monitor Step Common</li>
                <li class="sub">Ladder</li>
                <li class="sub">IL</li>
            </ul>
            <div class="pref-page">
                <h3 class="page-title">General Settings for the Editor</h3>
                <section class="pref-section first">
                    <h4>Set Online Update</h4>
                    <div class="pref-row"><label><input type="checkbox">Check for Update when the program starts</label></div>
                </section>
                <section class="pref-section">
                    <h4>Set Editor Language</h4>
                    <div class="pref-row language">
                        <label for="language">Language</label>
                        <div class="combo open">
                            <select id="language"><option>English</option><option>Chinese (Simplified)</option><option>Japanese</option></select>
                            <ul class="dropdown">
                                <li>English</li>
                                <li class="active">Chinese (Simplified)</li>
                                <li>Japanese</li>
                            </ul>
                        </div>
                    </div>
                </section>
                <section class="pref-section">
                    <h4>Backup</h4>
                    <div class="pref-row"><label><input type="checkbox" checked>Save Backup File whenever you save the Project File</label></div>
                </section>
                <section class="pref-section">
                    <h4>Editor Memory Condition</h4>
                    <div class="pref-row"><label><input type="checkbox" checked>Enable</label></div>
                </section>
            </div>
        </div>
        <div class="dialog-footer">
            <button class="btn default">OK (<u>O</u>)</button>
            <button class="btn">Cancel</button>
        </div>
        <svg class="pointer-arrow" viewBox="0 0 290 82"><path d="M0 5L17 0 14 4 289 79 288 80 11 12 12 17z" fill="#ff2010"/></svg>
    </div>
</body>
</html>
```
FILE: styles.css
```css
* {
    box-sizing: border-box;
}

body {
    margin: 0;
    overflow: hidden;
    position: relative;
    background: #f0f0f0;
    color: #000;
    font: 12px/16px Roboto, "Liberation Sans", "Noto Sans CJK SC", sans-serif;
}

h1, h2, h3, h4, ul {
    margin: 0;
    padding: 0;
    font-size: inherit;
    font-weight: 400;
    list-style: none;
}

button, select, input {
    font: inherit;
    color: inherit;
    margin: 0;
    border-radius: 0;
}

button {
    padding: 0;
    border: 0;
    background: none;
}

svg {
    display: block;
    flex-shrink: 0;
}

.sprite {
    position: absolute;
    width: 0;
    height: 0;
}

.glyph-serif {
    font-family: "Liberation Serif", serif;
    font-style: italic;
    font-weight: 700;
}

.icon {
    width: 16px;
    height: 16px;
}

.app {
    display: flex;
    flex-direction: column;
    height: 100vh;
}

/* title bar and menu */
.titlebar {
    display: flex;
    align-items: center;
    gap: 6px;
    height: 23px;
    padding-left: 2px;
    background: #fff;
    font-family: "Noto Sans", sans-serif;
}

.app-name {
    color: #999;
}

.window-buttons {
    display: flex;
    margin-left: auto;
    gap: 33px;
    padding-right: 20px;
}

.window-buttons svg, .dialog-title button svg {
    width: 12px;
    height: 12px;
    fill: none;
    stroke: #777;
}

.menu {
    display: flex;
    height: 25px;
    padding-left: 15px;
    gap: 23px;
    font-family: "Noto Sans", sans-serif;
}

.menu button {
    white-space: nowrap;
}

.menu u, .btn u {
    text-underline-offset: 1px;
}

.menu, .toolbars {
    background: linear-gradient(90deg, #f0f0f0, #fafafa);
}

/* toolbars */
.toolbars {
    display: flex;
    flex-direction: column;
    align-items: flex-start;
    gap: 1px;
    padding: 0 0 1px 3px;
}

.toolbar-row {
    display: flex;
    gap: 1px;
}

.toolbar {
    display: flex;
    align-items: center;
    height: 24px;
    border-right: 1px solid #b4b4b4;
    border-radius: 3px 3px 0 3px;
    background: linear-gradient(#fcfcfc, #f0f0f0);
}

.modes {
    height: 39px;
    padding-right: 7px;
    font-family: "Noto Sans", sans-serif;
}

.mode {
    display: flex;
    align-items: center;
    height: 38px;
    gap: 3px;
    padding: 0 5px 0 2px;
    border: 1px solid transparent;
    line-height: 17px;
    text-align: center;
}

.mode.active, .tool.active {
    border: 1px solid #0078d7;
    background: #f6fafe;
}

.common {
    margin: 1px 0 0 643px;
}

.package-bar {
    margin-left: 276px;
    padding-right: 2px;
}

.grip {
    width: 9px;
    height: 15px;
    flex-shrink: 0;
    background: repeating-linear-gradient(#b8b8b8 0 2px, transparent 2px 4px) 3px 0 / 2px 15px no-repeat;
}

.modes .grip {
    height: 30px;
    background-size: 2px 30px;
}

.tool {
    display: flex;
    align-items: center;
    justify-content: center;
    width: 23px;
    height: 22px;
}

.tool svg {
    width: 16px;
    height: 16px;
}

.sep {
    width: 6px;
    height: 15px;
    background: linear-gradient(#b4b4b4, #b4b4b4) 3px 0 / 1px 100% no-repeat;
}

/* workspace */
.workspace {
    display: flex;
    flex: 1;
    min-height: 0;
}

.dock {
    display: flex;
    flex-direction: column;
    gap: 3px;
    padding-top: 4px;
}

.dock-left {
    width: 246px;
    margin-right: 4px;
}

.dock-right {
    width: 216px;
    margin-left: 4px;
    overflow: hidden;
}

.dock-header {
    display: flex;
    align-items: center;
    gap: 5px;
    height: 17px;
    margin: 0 0 2px 1px;
    padding: 0 4px;
    border: 1px solid #808080;
    border-radius: 2px;
    line-height: 14px;
}

.dock-header h2 {
    flex: 1;
}

.dock-header svg {
    width: 10px;
    height: 10px;
}

.field {
    display: flex;
    align-items: center;
    height: 28px;
    margin-left: 1px;
    padding: 0 3px 0 4px;
    background: #fff;
}

.dock-left label {
    width: 102px;
}

.combo {
    position: relative;
    flex: 1;
    min-width: 0;
}

.combo::after {
    content: '';
    position: absolute;
    right: 7px;
    top: 5px;
    width: 6px;
    height: 6px;
    border: solid #555;
    border-width: 0 1px 1px 0;
    transform: rotate(45deg);
}

.combo select {
    appearance: none;
    display: block;
    width: 100%;
    height: 21px;
    padding: 0 19px 0 3px;
    border: 1px solid #adadad;
    background: #e1e1e1;
    font-size: 11px;
}

.refine {
    flex: 1;
    min-width: 0;
    height: 20px;
    margin-right: 3px;
    border: 1px solid #7a7a7a;
    background: #fff;
}

.btn {
    height: 20px;
    border: 1px solid #adadad;
    background: #e1e1e1;
}

.btn:disabled {
    border-color: #bfbfbf;
    background: #ccc;
    color: #838383;
}

.field .btn {
    width: 46px;
}

.list-tools {
    display: flex;
    align-items: center;
    height: 29px;
    margin-left: 1px;
    background: #fff;
}

.screen-list {
    display: flex;
    flex-direction: column;
    flex: 1;
    min-height: 0;
    margin: 5px 1px 0 1px;
    border: 1px solid #646464;
    background: #fff9ee;
    overflow: hidden;
}

.category {
    display: flex;
    align-items: center;
    gap: 4px;
    height: 24px;
    padding-left: 1px;
    font-size: 11px;
}

.screen-item {
    display: flex;
    align-items: center;
    height: 50px;
    padding-left: 16px;
    background: #d5e3ff;
    color: #0a0a8c;
    font-size: 11px;
    white-space: nowrap;
}

.thumb {
    width: 64px;
    height: 26px;
    flex-shrink: 0;
    background: #000;
}

.screen-no {
    width: 84px;
    margin-left: 67px;
    flex-shrink: 0;
}

.scrollbar {
    display: flex;
    align-items: center;
    height: 16px;
    margin-top: auto;
    padding: 0 5px;
    background: #f0f0f0;
}

.scrollbar svg {
    width: 8px;
    height: 10px;
    fill: none;
    stroke: #505050;
    stroke-width: 2;
}

.scroll-track {
    flex: 1;
    height: 100%;
    padding: 0 4px;
}

.scroll-thumb {
    display: block;
    width: 70%;
    height: 100%;
    background: #cdcdcd;
}

.tabs {
    display: flex;
    height: 23px;
    background: #f8f8f8;
    box-shadow: inset 0 1px #646464;
    color: #999;
    font-size: 11px;
}

.tab {
    display: flex;
    align-items: center;
    gap: 6px;
    height: 21px;
    padding: 1px 4px 0 2px;
}

.tab:first-child {
    padding-left: 7px;
}

.tab:not(.active) + .tab:not(.active) {
    background: linear-gradient(#777, #777) 0 4px / 1px 13px no-repeat;
    padding-left: 3px;
}

.tab.active {
    border: solid #646464;
    border-width: 0 1px 1px 0;
    background: #f0f0f0;
    color: #000;
}

/* open document */
.document {
    display: flex;
    flex-direction: column;
    flex: 1;
    min-width: 0;
    border: 1px solid #7c7c7c;
    background: #f8f8f8;
}

.doc-tabs {
    display: flex;
    align-items: center;
    justify-content: space-between;
    height: 24px;
    padding: 0 7px 1px 3px;
}

.doc-tab {
    display: flex;
    align-items: center;
    gap: 7px;
    height: 21px;
    padding: 0 4px;
    border-right: 1px solid #646464;
    background: #f0f0f0;
    font-weight: 700;
}

.base-icon {
    width: 16px;
    height: 12px;
}

.doc-close {
    padding: 2px;
    background: #7c7c7c;
    color: #fff;
}

.doc-close svg {
    width: 8px;
    height: 8px;
}

.doc-arrows {
    width: 20px;
    height: 10px;
}

.canvas {
    position: relative;
    flex: 1;
    margin: 0 1px 1px;
    background: #a0a0a0;
    overflow: hidden;
}

.screen {
    position: absolute;
    left: 59px;
    top: 59px;
    width: 402px;
    height: 162px;
    border: 1px solid #fff;
    background: #000;
}

.handle {
    position: absolute;
    width: 13px;
    height: 5px;
    border: 1px solid #000;
    background: #c8c8c8;
}

.handle-a {
    left: 87px;
    top: 37px;
}

.handle-b {
    left: 412px;
    top: 37px;
}

.handle-c {
    left: 93px;
    top: 236px;
}

/* package panel */
.dock-right .field {
    padding: 0 9px 0 8px;
}

.package-area {
    flex: 1;
    min-height: 0;
    margin-left: 1px;
    padding: 9px 9px 4px 8px;
    background: #fff;
}

.package-list {
    height: 100%;
    border: 1px solid #000;
}

.package-actions {
    display: flex;
    align-items: center;
    gap: 2px;
    height: 28px;
    margin-left: 1px;
    padding-left: 9px;
    background: #fff;
}

.package-actions .btn {
    width: 66px;
    flex-shrink: 0;
}

.package-actions .btn:disabled {
    color: #a0a0a0;
    text-shadow: 1px 1px #fff;
}

.package-actions .use-btn {
    margin-left: 38px;
}

/* bottom bars */
.output-bar {
    display: flex;
    height: 25px;
    padding: 3px 0 0 2px;
    background: linear-gradient(90deg, #f0f0f0 99px, #f8f8f8 99px);
}

.output-tab {
    display: flex;
    align-items: center;
    gap: 5px;
    padding: 0 3px 0 3px;
    border: 1px solid #808080;
    border-bottom: 0;
    color: #333;
}

.function-bar {
    display: flex;
    align-items: center;
    height: 26px;
    padding-right: 24px;
    border-bottom: 1px solid #d8d8d8;
    background: linear-gradient(#fdfdfd, #f2f2f2);
    font-family: "Noto Sans", sans-serif;
}

.function-bar .grip {
    width: 12px;
}

.fn {
    display: flex;
    align-items: center;
    flex: 1 1 0;
    gap: 2px;
    white-space: nowrap;
}

.fn kbd {
    width: 25px;
    padding-left: 2px;
    background: #d8e5f3;
    font: inherit;
    text-align: left;
}

.fn:disabled {
    color: #8c8c8c;
}

.fn:disabled kbd {
    background: #dedede;
}

.status {
    display: flex;
    justify-content: flex-end;
    height: 23px;
}

.zoom, .position, .model {
    display: flex;
    align-items: center;
    border-left: 1px solid #d4d4d4;
}

.zoom {
    gap: 6px;
    padding: 0 4px 0 10px;
}

.zoom-btn {
    width: 12px;
    height: 12px;
    border-radius: 2px;
    background: #3c3c3c;
}

.zoom-btn svg {
    stroke: #fff;
    stroke-width: 2;
}

.zoom-range {
    appearance: none;
    width: 102px;
    height: 18px;
    background:
        linear-gradient(#b0b0b0, #b0b0b0) 0 1px / 102px 4px no-repeat,
        repeating-linear-gradient(90deg, transparent 0 3px, #333 3px 6px) 6px 8px / 36px 4px no-repeat,
        repeating-linear-gradient(90deg, #b8b8b8 0 6px, transparent 6px 8px) 40px 8px / 28px 4px no-repeat,
        repeating-linear-gradient(90deg, transparent 0 3px, #333 3px 6px) 66px 8px / 30px 4px no-repeat;
}

.zoom-range::-webkit-slider-thumb {
    appearance: none;
    width: 6px;
    height: 13px;
    margin-top: 3px;
    border: 2px solid #555;
    border-radius: 2px;
    background: #eee;
}

.zoom-value {
    width: 81px;
    height: 17px;
    border: 1px solid #707070;
    background: #d2d2d2;
}

.position {
    width: 100px;
    gap: 7px;
    padding-left: 11px;
}

.position svg {
    width: 10px;
    height: 10px;
    margin-bottom: 6px;
}

.model {
    width: 59px;
    padding-left: 3px;
}

.taskbar {
    display: flex;
    height: 8px;
    overflow: hidden;
    padding: 0 75px 0 295px;
    gap: 1px;
    background: linear-gradient(90deg, #20373f, #1c2b40);
}

.task {
    width: 48px;
}

.task-orange {
    background: #ab6a35;
}

.task-gray {
    background: #50636b;
}

.clock {
    margin-left: auto;
    padding-top: 2px;
    color: #fff;
}

/* preferences dialog */
.dialog {
    position: absolute;
    left: 626px;
    top: 284px;
    width: 667px;
    border: 1px solid #4c4c4c;
    background: #f0f0f0;
    box-shadow: 0 4px 16px rgba(0, 0, 0, 0.4);
    font-size: 11px;
}

.dialog-title {
    display: flex;
    align-items: center;
    gap: 5px;
    height: 25px;
    padding: 0 9px 1px 3px;
    background: #fff;
    font-family: "Noto Sans", sans-serif;
    font-size: 12px;
}

.dialog-title h2 {
    flex: 1;
}

.dialog-title button svg {
    stroke: #000;
}

.dialog-body {
    display: flex;
    gap: 6px;
    padding: 9px 24px 0 8px;
}

.pref-nav {
    width: 112px;
    height: 370px;
    padding: 2px 1px;
    border: 1px solid #828790;
    background: #fff;
    white-space: nowrap;
    overflow: hidden;
    line-height: 14px;
}

.pref-nav li {
    padding-left: 5px;
}

.pref-nav .sub {
    padding-left: 11px;
}

.pref-nav .active {
    background: #f0f0f0;
}

.pref-page {
    flex: 1;
}

.page-title {
    margin: 3px 0 6px;
}

.pref-section {
    margin-left: 6px;
}

.pref-section h4 {
    padding-left: 2px;
    border-bottom: 1px solid #a0a0a0;
    box-shadow: 0 1px #fff;
}

.first h4 {
    padding-bottom: 4px;
}

.pref-row {
    display: flex;
    align-items: flex-start;
    min-height: 32px;
    padding: 8px 0 3px 17px;
}

.pref-row label {
    display: flex;
    align-items: center;
    gap: 4px;
    line-height: 14px;
}

.pref-row input {
    appearance: none;
    width: 13px;
    height: 13px;
    border: 1px solid #333;
    background: #fff;
}

.pref-row input:checked::after {
    content: '';
    display: block;
    width: 9px;
    height: 5px;
    margin: 2px 0 0 1px;
    border: solid #222;
    border-width: 0 0 1px 1px;
    transform: rotate(-45deg);
}

.first .pref-row {
    min-height: 33px;
}

.language {
    min-height: 33px;
    padding-left: 19px;
}

.language label {
    width: 77px;
    line-height: 21px;
}

.language .combo {
    flex: 0 0 168px;
}

.open select {
    border-color: #005499;
    background: #cce4f7;
}

.dropdown {
    position: absolute;
    z-index: 1;
    left: 0;
    top: 21px;
    width: 100%;
    border: 1px solid #0078d7;
    background: #fff;
    box-shadow: 3px 3px 3px rgba(0, 0, 0, 0.5);
    line-height: 13px;
}

.dropdown li {
    padding-left: 2px;
}

.dropdown .active {
    background: #0078d7;
    color: #fff;
}

.dialog-footer {
    display: flex;
    justify-content: flex-end;
    gap: 8px;
    padding: 34px 16px 10px;
}

.dialog-footer .btn {
    width: 82px;
}

.btn.default {
    border: 2px solid #0078d7;
}

.pointer-arrow {
    position: absolute;
    z-index: 2;
    left: 408px;
    top: 180px;
    width: 290px;
    height: 82px;
}
```
